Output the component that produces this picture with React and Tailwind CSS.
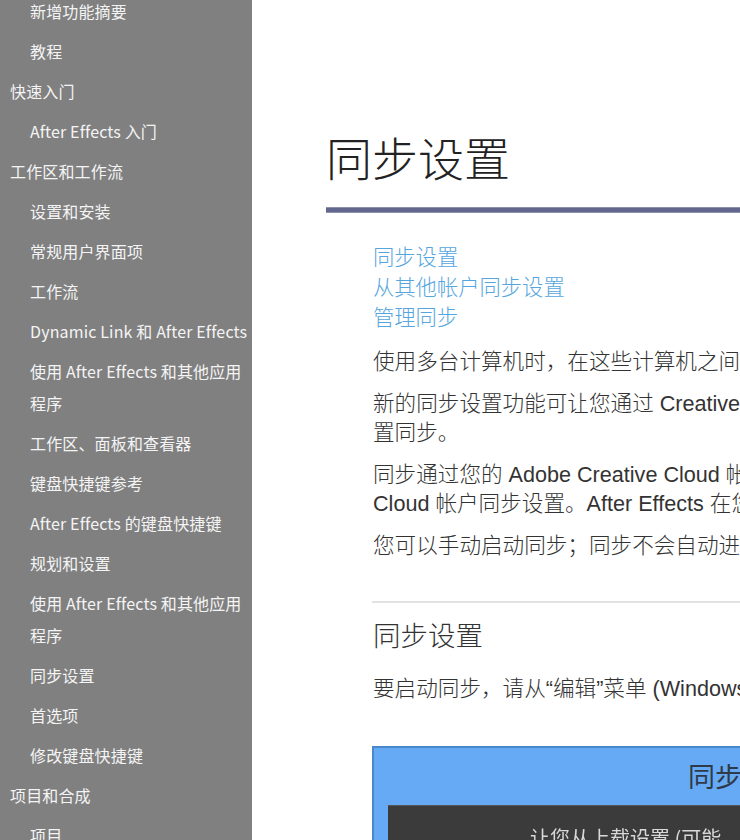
import React from "react";

const side = [
  { t: "新增功能摘要", s: 1 },
  { t: "教程", s: 1 },
  { t: "快速入门", s: 0 },
  { t: "After Effects 入门", s: 1 },
  { t: "工作区和工作流", s: 0 },
  { t: "设置和安装", s: 1 },
  { t: "常规用户界面项", s: 1 },
  { t: "工作流", s: 1 },
  { t: "Dynamic Link 和 After Effects", s: 1 },
  { t: "使用 After Effects 和其他应用", t2: "程序", s: 1 },
  { t: "工作区、面板和查看器", s: 1 },
  { t: "键盘快捷键参考", s: 1 },
  { t: "After Effects 的键盘快捷键", s: 1 },
  { t: "规划和设置", s: 1 },
  { t: "使用 After Effects 和其他应用", t2: "程序", s: 1 },
  { t: "同步设置", s: 1 },
  { t: "首选项", s: 1 },
  { t: "修改键盘快捷键", s: 1 },
  { t: "项目和合成", s: 0 },
  { t: "项目", s: 1 },
];

const bodyFont = "font-['Liberation_Sans','Noto_Sans_CJK_SC',sans-serif]";

export default function App() {
  return (
    <div className="w-[740px] h-[840px] overflow-hidden flex bg-white">
      <aside className="w-[252px] shrink-0 h-full bg-[#808080] overflow-hidden font-['Noto_Sans_CJK_SC',sans-serif] text-[16px] text-[#f4f4f4]">
        <div className="-mt-[5px] flex flex-col gap-[8px]">
          {side.map((it, i) => (
            <div
              key={i}
              className={
                "leading-[32px] whitespace-nowrap tracking-[0.15px] " + (it.s ? "pl-[30px]" : "pl-[10px]")
              }
            >
              <div>{it.t}</div>
              {it.t2 && <div>{it.t2}</div>}
            </div>
          ))}
        </div>
      </aside>
      <main className={"flex-1 min-w-0 pl-[74px] " + bodyFont}>
        <div className="w-[900px]">
          <h1 className="mt-[133px] text-[46px] leading-[56px] text-[#222] font-light font-['Liberation_Serif','Noto_Sans_CJK_SC',serif]">
            同步设置
          </h1>
          <div className="mt-[18px] h-[6px] bg-[#63678e] border-y border-[#8d90ad]"></div>
          <div className="pl-[46px]">
            <div className="mt-[30px] pl-[1px] flex flex-col text-[21.3px] leading-[30px] text-[#55a5de] font-light">
              <span>同步设置</span>
              <span>从其他帐户同步设置</span>
              <span>管理同步</span>
            </div>
            <div className="pl-[1px] text-[21.6px] leading-[29px] text-[#333] font-light whitespace-nowrap">
              <p className="mt-[14px]">使用多台计算机时，在这些计算机之间管理和同步首选项可能很费时、很复杂并且容易出错。</p>
              <p className="mt-[13px]">
                新的同步设置功能可让您通过 Creative Cloud 将常规首选项和设置同步到云。如果您使用两台计算机，则同步设
                <br />
                置同步。
              </p>
              <p className="mt-[13px]">
                同步通过您的 Adobe Creative Cloud 帐户进行。所有设置都上载到您的 Creative
                <br />
                Cloud 帐户同步设置。After Effects 在您的计算机上下载并应用这些设置。
              </p>
              <p className="mt-[13px]">您可以手动启动同步；同步不会自动进行，且无法按计划进行。</p>
            </div>
            <div className="mt-[41px] h-[2px] bg-[#e2e2e2]"></div>
            <h2 className="mt-[16px] pl-[1px] text-[27.5px] leading-[36px] text-[#333] font-light">同步设置</h2>
            <p className="mt-[19px] pl-[1px] text-[21.6px] leading-[29px] text-[#333] font-light whitespace-nowrap">
              要启动同步，请从“编辑”菜单 (Windows) 或 After Effects 菜单 (Mac OS) 中选择“同步设置”。
            </p>
            <div className="mt-[43px] w-[520px] h-[200px] border-2 border-[#4a88cc] bg-[#66aaf5] flex flex-col">
              <div className="h-[57px] pl-[314px] flex items-center font-['Noto_Sans_CJK_SC',sans-serif] text-[27px] text-[#2f3a48]">
                同步设置
              </div>
              <div className="ml-[14px] flex-1 bg-[#3b3b3b] border-t border-[#555] pl-[142px] pt-[18px] font-['Noto_Sans_CJK_SC',sans-serif] text-[20px] leading-[28px] text-[#d8d8d8] whitespace-nowrap blur-[0.6px]">
                让您从上载设置 (可能
              </div>
            </div>
          </div>
        </div>
      </main>
    </div>
  );
}
